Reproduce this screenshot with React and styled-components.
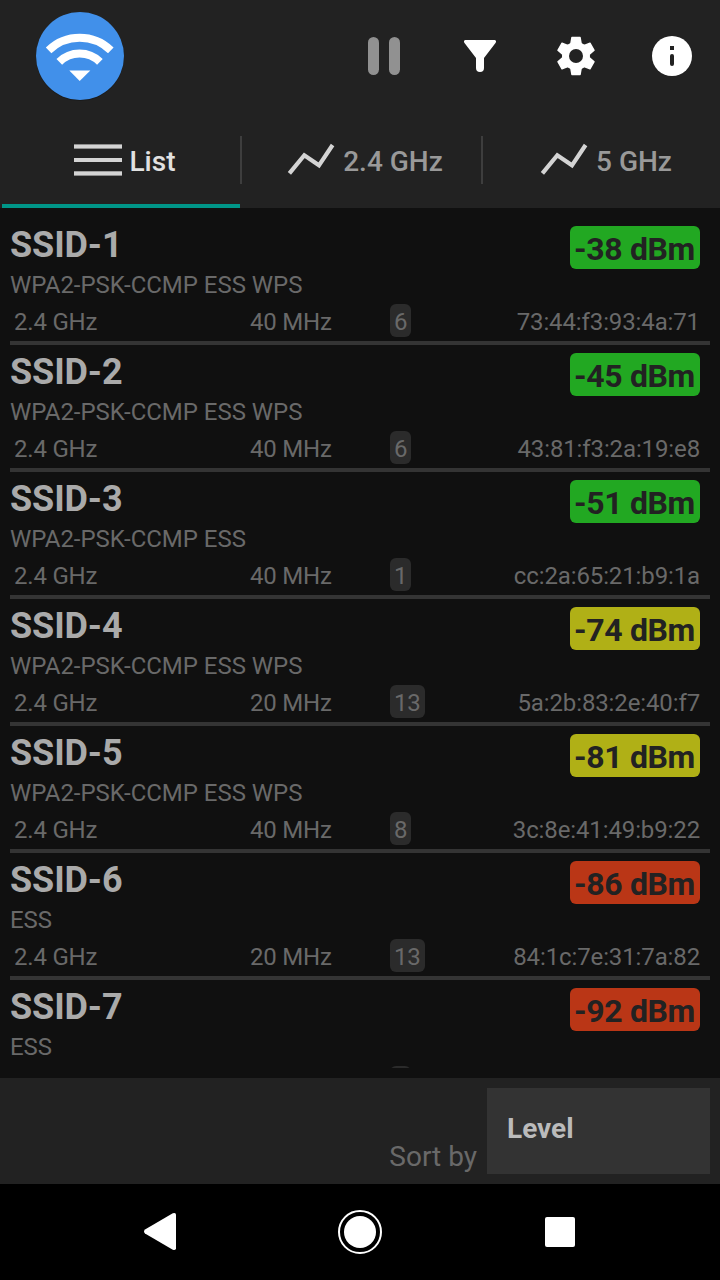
import React from "react";
import styled, { createGlobalStyle } from "styled-components";

const GlobalStyle = createGlobalStyle`
  *, *::before, *::after { box-sizing: border-box; }
  body {
    margin: 0;
    background: #000;
    font-family: Roboto, "Liberation Sans", sans-serif;
  }
  svg { display: block; }
`;

const Screen = styled.div`
  width: 720px;
  height: 1280px;
  display: flex;
  flex-direction: column;
  overflow: hidden;
  background: #101010;
`;

const TopBar = styled.header`
  height: 112px;
  flex: none;
  display: flex;
  align-items: center;
  justify-content: space-between;
  padding-left: 32px;
  background: #222;
`;

const Actions = styled.div`
  display: flex;
`;

const ActionButton = styled.button`
  width: 96px;
  height: 96px;
  padding: 0;
  border: 0;
  background: none;
  display: grid;
  place-items: center;
`;

const TabBar = styled.nav`
  height: 96px;
  flex: none;
  display: grid;
  grid-template-columns: 240px 2px 239px 2px 237px;
  align-items: center;
  background: #222;
`;

const Tab = styled.button`
  height: 96px;
  border: 0;
  border-bottom: 4px solid ${(p) => (p.$active ? "#009688" : "transparent")};
  margin-left: ${(p) => (p.$active ? "2px" : "0")};
  background: none;
  color: ${(p) => (p.$active ? "#e1e1e1" : "#999")};
  font: 500 28px/33px Roboto, sans-serif;
  display: flex;
  align-items: center;
  justify-content: center;
  gap: 8px;
  padding: 0 0 0 ${(p) => p.$inset || 7}px;
  white-space: nowrap;
`;

const TabIcon = styled.span`
  padding-top: ${(p) => p.$drop}px;
`;

const TabLabel = styled.span`
  padding-top: 6px;
`;

const TabDivider = styled.span`
  width: 2px;
  height: 48px;
  background: #3e3e3e;
`;

const ListArea = styled.main`
  height: 870px;
  flex: none;
  padding: 10px;
`;

const NetworkList = styled.ul`
  height: 850px;
  margin: 0;
  padding: 0;
  overflow: hidden;
  list-style: none;
`;

const NetworkRow = styled.li`
  height: 127px;
  border-bottom: 4px solid #343434;
  color: #696969;
  font-size: 24px;
  line-height: 28px;
`;

const RowHead = styled.div`
  height: 53px;
  display: flex;
  justify-content: space-between;
  align-items: flex-start;
  padding: 6px 10px 0 0;
`;

const Ssid = styled.h2`
  margin: 0;
  color: #aaa;
  font-size: 36px;
  line-height: 42px;
  font-weight: 700;
  letter-spacing: -0.1px;
`;

const LEVEL_COLORS = { good: "#22a822", fair: "#b0b016", weak: "#ba3616" };

const LevelBadge = styled.span`
  width: 130px;
  height: 43px;
  margin-top: 2px;
  padding-right: 1px;
  border-radius: 6px;
  background: ${(p) => LEVEL_COLORS[p.$level]};
  color: #222;
  font-size: 32px;
  font-weight: 700;
  line-height: 47px;
  letter-spacing: -0.35px;
  text-align: center;
  white-space: nowrap;
`;

const Security = styled.div`
  height: 33px;
  letter-spacing: -0.03px;
`;

const RowDetails = styled.div`
  display: grid;
  grid-template-columns: 236px 140px 1fr auto;
  grid-template-rows: 33px;
  align-items: start;
  height: 33px;
  padding: 0 10px 0 4px;
  line-height: 37px;
  letter-spacing: -0.22px;
`;

const Channel = styled.span`
  justify-self: start;
  height: 33px;
  padding: 0 4px;
  border-radius: 6px;
  background: #2b2b2b;
`;

const Detail = styled.span`
  white-space: nowrap;
`;

const Mac = styled(Detail)`
  letter-spacing: -0.12px;
`;

const SortBar = styled.footer`
  height: 106px;
  flex: none;
  display: flex;
  align-items: flex-end;
  justify-content: flex-end;
  gap: 10px;
  padding: 10px;
  background: #222;
`;

const SortLabel = styled.label`
  padding-bottom: 1px;
  color: #696969;
  font-size: 28px;
  line-height: 33px;
`;

const SortSelect = styled.button`
  width: 223px;
  height: 86px;
  border: 0;
  padding: 0 20px 5px;
  background: #333;
  color: #bbb;
  font: 700 28px/33px Roboto, sans-serif;
  text-align: left;
`;

const SystemNav = styled.div`
  flex: 1;
  display: flex;
  align-items: center;
  justify-content: center;
  gap: 104px;
  background: #000;
`;

const NavKey = styled.button`
  width: 96px;
  height: 96px;
  padding: 0;
  border: 0;
  background: none;
`;

const Logo = () => (
  <svg width="96" height="96" viewBox="32 8 96 96">
    <circle cx="80" cy="57" r="44" fill="#1b1b1b" />
    <circle cx="80" cy="56" r="44" fill="#4190ea" />
    <path d="M48.6 50.4A44.7 44.7 0 0 1 110.8 50.4" fill="none" stroke="#fff" strokeWidth="8" />
    <path d="M59.3 61.9A28.8 28.8 0 0 1 99.9 61.9" fill="none" stroke="#fff" strokeWidth="8" />
    <path d="M69.3 70.4H90.3L79.7 81Z" fill="#fff" />
  </svg>
);

const PauseIcon = () => (
  <svg width="96" height="96" viewBox="336 8 96 96" fill="#919191">
    <rect x="368" y="37" width="11" height="38" rx="5.5" />
    <rect x="389" y="37" width="11" height="38" rx="5.5" />
  </svg>
);

const FilterIcon = () => (
  <svg width="96" height="96" viewBox="432 8 96 96" fill="#fff">
    <path d="M465.5 40H494.5Q496.8 40.5 495.7 42.8L484 58V68A4 4 0 0 1 476 68V58L464.3 42.8Q463.2 40.5 465.5 40Z" />
  </svg>
);

const GearIcon = () => (
  <svg width="48" height="48" viewBox="-24 -24 48 48" fill="#fff">
    {[0, 60, 120, 180, 240, 300].map((angle) => (
      <path
        key={angle}
        d="M-4.1 -18.5H4.1L5.1 -12.6L3 0H-3L-5.1 -12.6Z"
        transform={`rotate(${angle})`}
        stroke="#fff"
        strokeWidth="1.4"
        strokeLinejoin="round"
      />
    ))}
    <circle r="14" />
    <circle r="7" fill="#222" />
  </svg>
);

const InfoIcon = () => (
  <svg width="96" height="96" viewBox="624 8 96 96">
    <circle cx="672" cy="56" r="20" fill="#fff" />
    <rect x="670" y="46" width="4" height="4" fill="#222" />
    <rect x="670" y="54" width="4" height="12" rx="2" fill="#222" />
  </svg>
);

const ListIcon = () => (
  <svg width="48" height="32" viewBox="0 0 48 32" fill="#d4d4d4">
    <rect y="0.4" width="48" height="4.2" />
    <rect y="14" width="48" height="4" />
    <rect y="27.3" width="48" height="4.3" />
  </svg>
);

const GraphIcon = () => (
  <svg width="48" height="34" viewBox="0 0 48 34">
    <path d="M2.4 31.3L17.3 13.2L32 23.3L45.6 3" fill="none" stroke="#d4d4d4" strokeWidth="4.2" />
  </svg>
);

const networks = [
  { ssid: "SSID-1", security: "WPA2-PSK-CCMP ESS WPS", width: 40, channel: 6, mac: "73:44:f3:93:4a:71", dbm: -38, level: "good" },
  { ssid: "SSID-2", security: "WPA2-PSK-CCMP ESS WPS", width: 40, channel: 6, mac: "43:81:f3:2a:19:e8", dbm: -45, level: "good" },
  { ssid: "SSID-3", security: "WPA2-PSK-CCMP ESS", width: 40, channel: 1, mac: "cc:2a:65:21:b9:1a", dbm: -51, level: "good" },
  { ssid: "SSID-4", security: "WPA2-PSK-CCMP ESS WPS", width: 20, channel: 13, mac: "5a:2b:83:2e:40:f7", dbm: -74, level: "fair" },
  { ssid: "SSID-5", security: "WPA2-PSK-CCMP ESS WPS", width: 40, channel: 8, mac: "3c:8e:41:49:b9:22", dbm: -81, level: "fair" },
  { ssid: "SSID-6", security: "ESS", width: 20, channel: 13, mac: "84:1c:7e:31:7a:82", dbm: -86, level: "weak" },
  { ssid: "SSID-7", security: "ESS", channel: "\u2007", dbm: -92, level: "weak" },
];

const Network = ({ network }) => (
  <NetworkRow>
    <RowHead>
      <Ssid>{network.ssid}</Ssid>
      <LevelBadge $level={network.level}>{network.dbm} dBm</LevelBadge>
    </RowHead>
    <Security>{network.security}</Security>
    <RowDetails>
      <Detail>{network.mac && "2.4 GHz"}</Detail>
      <Detail>{network.width && `${network.width} MHz`}</Detail>
      <Channel>{network.channel}</Channel>
      <Mac>{network.mac}</Mac>
    </RowDetails>
  </NetworkRow>
);

export default function App() {
  return (
    <>
      <GlobalStyle />
      <Screen>
        <TopBar>
          <Logo />
          <Actions>
            <ActionButton aria-label="Pause"><PauseIcon /></ActionButton>
            <ActionButton aria-label="Filter"><FilterIcon /></ActionButton>
            <ActionButton aria-label="Settings"><GearIcon /></ActionButton>
            <ActionButton aria-label="About"><InfoIcon /></ActionButton>
          </Actions>
        </TopBar>
        <TabBar>
          <Tab $active><TabIcon $drop={4}><ListIcon /></TabIcon><TabLabel>List</TabLabel></Tab>
          <TabDivider />
          <Tab><TabIcon $drop={2}><GraphIcon /></TabIcon><TabLabel>2.4 GHz</TabLabel></Tab>
          <TabDivider />
          <Tab $inset={9}><TabIcon $drop={2}><GraphIcon /></TabIcon><TabLabel>5 GHz</TabLabel></Tab>
        </TabBar>
        <ListArea>
          <NetworkList>
            {networks.map((n) => <Network key={n.ssid} network={n} />)}
          </NetworkList>
        </ListArea>
        <SortBar>
          <SortLabel>Sort by</SortLabel>
          <SortSelect>Level</SortSelect>
        </SortBar>
        <SystemNav>
          <NavKey aria-label="Back">
            <svg width="96" height="96" viewBox="112 1184 96 96" fill="#fff">
              <path d="M145 1229.6L172.8 1213.3Q176 1212.2 176 1214.8V1248.2Q176 1250.8 172.8 1249.7L145 1233.6Q143 1231.6 145 1229.6Z" />
            </svg>
          </NavKey>
          <NavKey aria-label="Home">
            <svg width="96" height="96" viewBox="0 0 96 96">
              <circle cx="48" cy="48" r="21" fill="none" stroke="#fff" strokeWidth="2" />
              <circle cx="48" cy="48" r="16" fill="#fff" />
            </svg>
          </NavKey>
          <NavKey aria-label="Recent apps">
            <svg width="96" height="96" viewBox="0 0 96 96">
              <rect x="33" y="33" width="30" height="30" rx="2" fill="#fff" />
            </svg>
          </NavKey>
        </SystemNav>
      </Screen>
    </>
  );
}
